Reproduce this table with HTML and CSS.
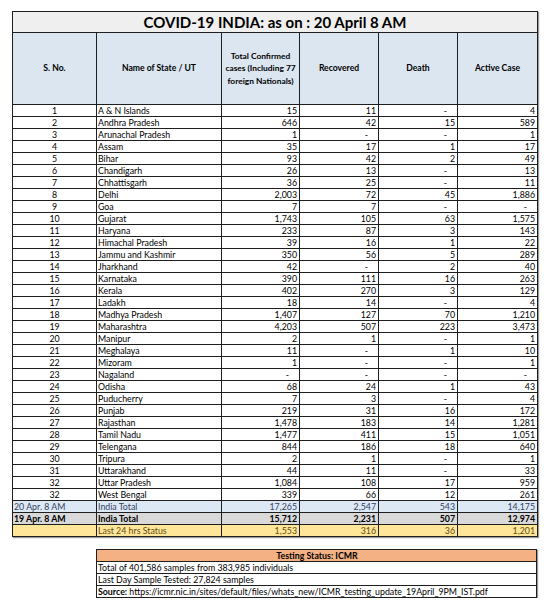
FILE: index.html
```html
<!DOCTYPE html>
<html>
<head>
<meta charset="utf-8">
<link rel="stylesheet" href="styles.css">
</head>
<body>
<div class="page">
<table class="main">
<colgroup><col class="c1"><col class="c2"><col class="c3"><col class="c4"><col class="c5"><col class="c6"></colgroup>
<thead>
<tr class="title"><th colspan="6">COVID-19 INDIA: as on : 20 April 8 AM</th></tr>
<tr class="head"><th>S. No.</th><th>Name of State / UT</th><th class="tc">Total Confirmed<br>cases (Including 77<br>foreign Nationals)</th><th>Recovered</th><th>Death</th><th>Active Case</th></tr>
</thead>
<tbody>
<tr><td class="sn">1</td><td class="nm">A &amp; N Islands</td><td>15</td><td>11</td><td class="d">-</td><td>4</td></tr>
<tr><td class="sn">2</td><td class="nm">Andhra Pradesh</td><td>646</td><td>42</td><td>15</td><td>589</td></tr>
<tr><td class="sn">3</td><td class="nm">Arunachal Pradesh</td><td>1</td><td class="d">-</td><td class="d">-</td><td>1</td></tr>
<tr><td class="sn">4</td><td class="nm">Assam</td><td>35</td><td>17</td><td>1</td><td>17</td></tr>
<tr><td class="sn">5</td><td class="nm">Bihar</td><td>93</td><td>42</td><td>2</td><td>49</td></tr>
<tr><td class="sn">6</td><td class="nm">Chandigarh</td><td>26</td><td>13</td><td class="d">-</td><td>13</td></tr>
<tr><td class="sn">7</td><td class="nm">Chhattisgarh</td><td>36</td><td>25</td><td class="d">-</td><td>11</td></tr>
<tr><td class="sn">8</td><td class="nm">Delhi</td><td>2,003</td><td>72</td><td>45</td><td>1,886</td></tr>
<tr><td class="sn">9</td><td class="nm">Goa</td><td>7</td><td>7</td><td class="d">-</td><td class="d">-</td></tr>
<tr><td class="sn">10</td><td class="nm">Gujarat</td><td>1,743</td><td>105</td><td>63</td><td>1,575</td></tr>
<tr><td class="sn">11</td><td class="nm">Haryana</td><td>233</td><td>87</td><td>3</td><td>143</td></tr>
<tr><td class="sn">12</td><td class="nm">Himachal Pradesh</td><td>39</td><td>16</td><td>1</td><td>22</td></tr>
<tr><td class="sn">13</td><td class="nm">Jammu and Kashmir</td><td>350</td><td>56</td><td>5</td><td>289</td></tr>
<tr><td class="sn">14</td><td class="nm">Jharkhand</td><td>42</td><td class="d">-</td><td>2</td><td>40</td></tr>
<tr><td class="sn">15</td><td class="nm">Karnataka</td><td>390</td><td>111</td><td>16</td><td>263</td></tr>
<tr><td class="sn">16</td><td class="nm">Kerala</td><td>402</td><td>270</td><td>3</td><td>129</td></tr>
<tr><td class="sn">17</td><td class="nm">Ladakh</td><td>18</td><td>14</td><td class="d">-</td><td>4</td></tr>
<tr><td class="sn">18</td><td class="nm">Madhya Pradesh</td><td>1,407</td><td>127</td><td>70</td><td>1,210</td></tr>
<tr><td class="sn">19</td><td class="nm">Maharashtra</td><td>4,203</td><td>507</td><td>223</td><td>3,473</td></tr>
<tr><td class="sn">20</td><td class="nm">Manipur</td><td>2</td><td>1</td><td class="d">-</td><td>1</td></tr>
<tr><td class="sn">21</td><td class="nm">Meghalaya</td><td>11</td><td class="d">-</td><td>1</td><td>10</td></tr>
<tr><td class="sn">22</td><td class="nm">Mizoram</td><td>1</td><td class="d">-</td><td class="d">-</td><td>1</td></tr>
<tr><td class="sn">23</td><td class="nm">Nagaland</td><td class="d">-</td><td class="d">-</td><td class="d">-</td><td class="d">-</td></tr>
<tr><td class="sn">24</td><td class="nm">Odisha</td><td>68</td><td>24</td><td>1</td><td>43</td></tr>
<tr><td class="sn">25</td><td class="nm">Puducherry</td><td>7</td><td>3</td><td class="d">-</td><td>4</td></tr>
<tr><td class="sn">26</td><td class="nm">Punjab</td><td>219</td><td>31</td><td>16</td><td>172</td></tr>
<tr><td class="sn">27</td><td class="nm">Rajasthan</td><td>1,478</td><td>183</td><td>14</td><td>1,281</td></tr>
<tr><td class="sn">28</td><td class="nm">Tamil Nadu</td><td>1,477</td><td>411</td><td>15</td><td>1,051</td></tr>
<tr><td class="sn">29</td><td class="nm">Telengana</td><td>844</td><td>186</td><td>18</td><td>640</td></tr>
<tr><td class="sn">30</td><td class="nm">Tripura</td><td>2</td><td>1</td><td class="d">-</td><td>1</td></tr>
<tr><td class="sn">31</td><td class="nm">Uttarakhand</td><td>44</td><td>11</td><td class="d">-</td><td>33</td></tr>
<tr><td class="sn">32</td><td class="nm">Uttar Pradesh</td><td>1,084</td><td>108</td><td>17</td><td>959</td></tr>
<tr><td class="sn">32</td><td class="nm">West Bengal</td><td>339</td><td>66</td><td>12</td><td>261</td></tr>
<tr class="today"><td class="lt">20 Apr. 8 AM</td><td class="nm">India Total</td><td>17,265</td><td>2,547</td><td>543</td><td>14,175</td></tr>
<tr class="prev"><td class="lt">19 Apr. 8 AM</td><td class="nm">India Total</td><td>15,712</td><td>2,231</td><td>507</td><td>12,974</td></tr>
<tr class="delta"><td class="lt"></td><td class="nm">Last 24 hrs Status</td><td>1,553</td><td>316</td><td>36</td><td>1,201</td></tr>
</tbody>
</table>

<table class="test">
<tr class="thead"><th>Testing Status: ICMR</th></tr>
<tr><td>Total of 401,586 samples from 383,985 individuals</td></tr>
<tr><td>Last Day Sample Tested: 27,824 samples</td></tr>
<tr><td><b>Source:</b> https://icmr.nic.in/sites/default/files/whats_new/ICMR_testing_update_19April_9PM_IST.pdf</td></tr>
</table>
</div>
</body>
</html>
```

FILE: styles.css
```css
html, body {
  margin: 0;
  padding: 0;
  background: #ffffff;
}
.page {
  padding: 11px 0 0 12px;
  font-family: Lato, "Liberation Sans", sans-serif;
  color: #000;
}
table {
  border-collapse: collapse;
  table-layout: fixed;
}
.main {
  width: 525px;
  box-shadow: 1px 1px 1px #9a9a9a;
}
.c1 { width: 84px; }
.c2 { width: 125px; }
.c3 { width: 78px; }
.c4 { width: 79px; }
.c5 { width: 79px; }
.c6 { width: 80px; }
th, td {
  border: 1px solid #1e1e1e;
  padding: 0;
  white-space: nowrap;
  overflow: hidden;
}
.title th {
  height: 20px;
  background: #efefef;
  font-size: 15px;
  font-weight: 700;
  line-height: 20px;
  text-align: center;
}
.head th {
  height: 71px;
  background: #dce6f1;
  font-size: 8.6px;
  font-weight: 700;
  line-height: 12.3px;
  text-align: center;
  vertical-align: middle;
}
.head th.tc {
  font-size: 8.4px;
}
tbody td {
  height: 11px;
  font-size: 8.8px;
  line-height: 11px;
  text-align: right;
  padding-right: 2px;
}
tbody td.sn {
  text-align: center;
  padding-right: 0;
}
tbody td.nm, tbody td.lt {
  text-align: left;
  padding-left: 1px;
  padding-right: 0;
}
tbody td.d {
  padding-right: 10px;
}
.today td {
  background: #dde8f5;
  color: #34425f;
}
.prev td {
  background: #d9d9d9;
  font-weight: 700;
}
.delta td {
  background: #ffe699;
  color: #624c10;
}
.test {
  margin: 12px 0 0 84px;
  width: 441px;
  box-shadow: 1px 1px 1px #9a9a9a;
}
.test th, .test td {
  height: 11px;
  font-size: 8.8px;
  line-height: 11px;
  text-align: left;
  padding-left: 1px;
}
.test .thead th {
  background: #f4b183;
  font-weight: 700;
  text-align: center;
}
```
